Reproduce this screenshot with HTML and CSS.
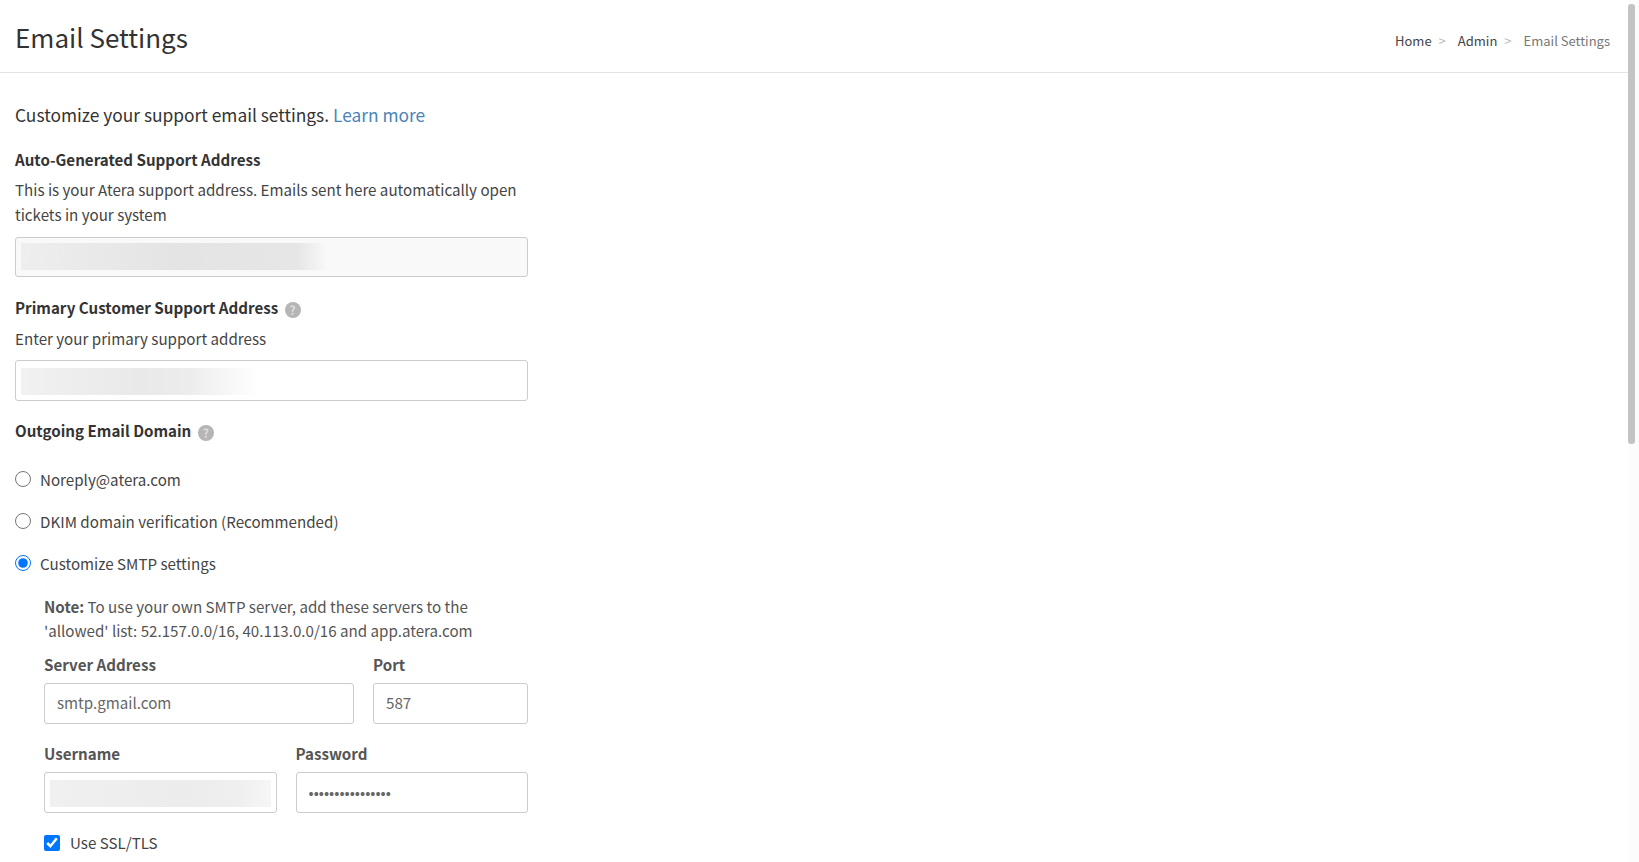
FILE: index.html
```html
<!DOCTYPE html>
<html lang="en">
<head>
<meta charset="utf-8">
<title>Email Settings</title>
<link rel="stylesheet" href="styles.css">
</head>
<body>
<header class="topbar">
  <h1 class="title">Email Settings</h1>
  <nav class="crumbs">
    <a class="crumb">Home</a><span class="sep sep-wide">&gt;</span><a class="crumb">Admin</a><span class="sep">&gt;</span><span class="crumb-current">Email Settings</span>
  </nav>
</header>
<main class="content">
  <p class="intro">Customize your support email settings. <a class="link">Learn more</a></p>

  <section class="block-auto">
    <h2 class="label">Auto-Generated Support Address</h2>
    <p class="desc">This is your Atera support address. Emails sent here automatically open tickets in your system</p>
    <div class="field field-disabled"><span class="blur blur-auto"></span></div>
  </section>

  <section class="block-primary">
    <h2 class="label">Primary Customer Support Address <span class="help">?</span></h2>
    <p class="desc desc-single">Enter your primary support address</p>
    <div class="field"><span class="blur blur-primary"></span></div>
  </section>

  <section class="block-domain">
    <h2 class="label">Outgoing Email Domain <span class="help">?</span></h2>
    <div class="options">
      <label class="option"><input type="radio" name="domain" class="radio">Noreply@atera.com</label>
      <label class="option"><input type="radio" name="domain" class="radio">DKIM domain verification (Recommended)</label>
      <label class="option"><input type="radio" name="domain" class="radio" checked>Customize SMTP settings</label>
    </div>
  </section>

  <section class="smtp">
    <p class="note"><strong>Note:</strong> To use your own SMTP server, add these servers to the 'allowed' list: 52.157.0.0/16, 40.113.0.0/16 and app.atera.com</p>
    <div class="row row-server">
      <div class="col col-server">
        <label class="sub-label">Server Address</label>
        <input class="input" type="text" value="smtp.gmail.com">
      </div>
      <div class="col col-port">
        <label class="sub-label">Port</label>
        <input class="input" type="text" value="587">
      </div>
    </div>
    <div class="row row-user">
      <div class="col col-half">
        <label class="sub-label">Username</label>
        <div class="field"><span class="blur blur-user"></span></div>
      </div>
      <div class="col col-half">
        <label class="sub-label">Password</label>
        <input class="input" type="password" value="aaaaaaaaaaaaaaaa">
      </div>
    </div>
    <label class="check"><input type="checkbox" class="checkbox" checked>Use SSL/TLS</label>
  </section>
</main>
<div class="scroll-track"><div class="scroll-thumb"></div></div>
</body>
</html>
```
FILE: styles.css
```css
* { box-sizing: border-box; }
html, body { height: 862px; overflow: hidden; }
body {
  margin: 0;
  background: #fff;
  color: #333;
  font-family: "Noto Sans CJK JP", "Noto Sans", sans-serif;
  font-size: 15.15px;
  line-height: 25px;
}
.topbar {
  height: 73px;
  border-bottom: 1px solid #e5e5e5;
  padding: 0 29px 0 15px;
  display: flex;
  justify-content: space-between;
  align-items: center;
}
.title { margin: 0 0 -1px; font-size: 26px; font-weight: 400; line-height: 40px; color: #333; }
.crumbs { font-size: 13px; line-height: 20px; display: flex; margin-top: 9px; }
.crumb { color: #444; }
.sep { color: #bbb; margin: 0 12px 0 7px; }
.sep-wide { margin: 0 12px 0 7px; }
.crumb-current { color: #777; }
.content { padding: 0 0 0 15px; width: 528px; }
.intro { margin: 28px 0 0; font-size: 17.35px; line-height: 28px; }
.link { color: #4a84b8; }
.block-auto { margin-top: 18px; }
.label { margin: 0; font-size: 15.15px; font-weight: 700; line-height: 25px; color: #333; }
.desc { margin: 5px 0 0; color: #444; }
.desc-single { margin-top: 6px; }
.field {
  height: 40px;
  border: 1px solid #ccc;
  border-radius: 3px;
  background: #fff;
  padding: 5px;
  display: flex;
}
.field-disabled { background: #f9f9f9; margin-top: 10px; height: 40px; }
.block-primary .field { margin-top: 9px; height: 41px; padding-top: 7px; }
.blur { display: block; height: 27px; }
.blur-auto { width: 307px; background: linear-gradient(90deg, #eee 0, #e4e4e4 50%, #e6e6e6 90%, #f9f9f9 100%); }
.blur-primary { width: 238px; background: linear-gradient(90deg, #f1f1f1 0, #e9e9e9 50%, #ececec 70%, #fff 100%); }
.blur-user { width: 221px; background: linear-gradient(90deg, #f0f0f0 0, #ececec 60%, #efefef 85%, #f6f6f6 100%); }
.block-primary { margin-top: 18px; }
.block-domain { margin-top: 17px; }
.help {
  display: inline-block;
  width: 16px;
  height: 16px;
  border-radius: 50%;
  background: #b5b5b5;
  color: #dedede;
  font-size: 12px;
  font-weight: 700;
  line-height: 16px;
  text-align: center;
  vertical-align: -1px;
  margin-left: 3px;
}
.options { margin-top: 15px; display: flex; flex-direction: column; }
.option { display: flex; align-items: center; height: 42px; color: #444; }
.radio { width: 16px; height: 16px; margin: 0 9px 0 0; flex: none; }
.smtp { padding-left: 29px; margin-top: 10px; }
.smtp, .smtp .note { color: #555; }
.note { margin: 0; line-height: 24px; }
.row { display: flex; gap: 19px; }
.row-server { margin-top: 10px; }
.row-user { margin-top: 17px; }
.col { display: flex; flex-direction: column; min-width: 0; }
.col-server { width: 310px; }
.col-port { width: 155px; }
.col-half { flex: 1; }
.row .field { height: 41px; padding-top: 7px; }
.sub-label { font-weight: 700; line-height: 25px; margin: 0 0 6px; color: #555; }
.input {
  width: 100%;
  height: 41px;
  border: 1px solid #ccc;
  border-radius: 3px;
  padding: 0 12px 3px;
  color: #666;
  font-family: inherit;
  font-size: 15.15px;
  outline: none;
}
.check { display: flex; align-items: center; margin-top: 17px; color: #444; }
.checkbox { width: 16px; height: 16px; margin: 0 10px 0 0; flex: none; }
.scroll-track { position: absolute; top: 0; right: 0; width: 11px; height: 862px; background: #fcfcfc; }
.scroll-thumb { margin: 4px 4px 0 0; height: 440px; background: #c4c4c4; border-radius: 3px; }
```
